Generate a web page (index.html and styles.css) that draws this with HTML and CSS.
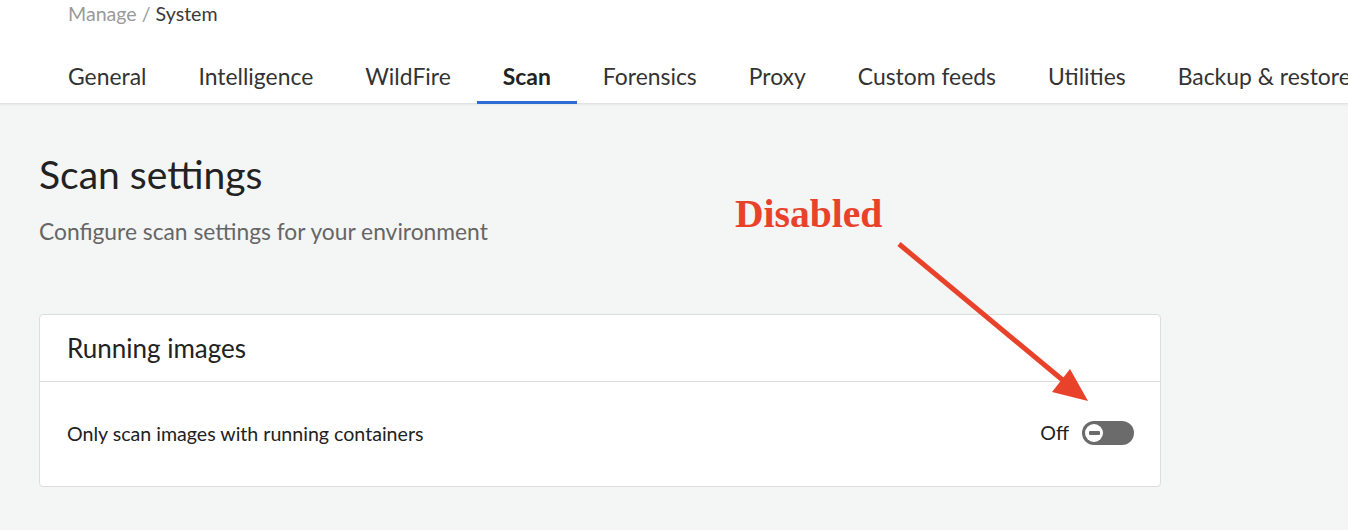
FILE: index.html
```html
<!DOCTYPE html>
<html>
<head>
<meta charset="utf-8">
<link rel="stylesheet" href="styles.css">
</head>
<body>
<header class="top">
  <div class="crumbs"><span class="crumb-muted">Manage</span> <span class="crumb-sep">/</span> <span class="crumb-cur">System</span></div>
  <nav class="tabs">
    <a class="tab">General</a>
    <a class="tab">Intelligence</a>
    <a class="tab">WildFire</a>
    <a class="tab active">Scan</a>
    <a class="tab">Forensics</a>
    <a class="tab">Proxy</a>
    <a class="tab">Custom feeds</a>
    <a class="tab">Utilities</a>
    <a class="tab">Backup &amp; restore</a>
  </nav>
</header>
<main class="content">
  <h1 class="title">Scan settings</h1>
  <p class="subtitle">Configure scan settings for your environment</p>
  <section class="card">
    <div class="card-head">Running images</div>
    <div class="card-row">
      <span class="row-label">Only scan images with running containers</span>
      <div class="switch-wrap">
        <span class="switch-state">Off</span>
        <span class="switch">
          <span class="knob"><span class="minus"></span></span>
        </span>
      </div>
    </div>
  </section>
  <div class="annot">Disabled</div>
  <svg class="arrow" width="240" height="200" viewBox="0 0 240 200">
    <line x1="4" y1="4" x2="170" y2="142" stroke="#e8432a" stroke-width="5" stroke-linecap="butt"/>
    <polygon points="193,161 157,152 175,129" fill="#e8432a"/>
  </svg>
</main>
</body>
</html>
```
FILE: styles.css
```css
* { box-sizing: border-box; }
html, body { margin: 0; padding: 0; }
body {
  font-family: Lato, "Open Sans", "Liberation Sans", sans-serif;
  background: #f4f5f5;
  color: #222;
  width: 1348px;
  height: 530px;
  overflow: hidden;
}
.top {
  background: #fff;
  height: 104px;
  border-bottom: 1px solid #e2e4e4;
  box-shadow: 0 1px 2px rgba(0,0,0,0.06);
  padding-left: 42px;
}
.crumbs {
  font-size: 19.6px;
  line-height: 22px;
  padding: 3px 0 0 26px;
  height: 51px;
}
.crumb-muted, .crumb-sep { color: #9a9a9a; }
.crumb-cur { color: #3a3a3a; }
.tabs {
  display: flex;
  white-space: nowrap;
}
.tab {
  display: block;
  padding: 0 26px;
  font-size: 22.9px;
  line-height: 28px;
  height: 53px;
  padding-top: 11px;
  color: #333;
  border-bottom: 3px solid transparent;
}
.tab.active {
  font-weight: 700;
  color: #222;
  border-bottom-color: #2d6cd0;
}
.content {
  position: relative;
  padding: 0 39px;
  height: 425px;
}
.title {
  margin: 0;
  padding-top: 50px;
  font-size: 39px;
  line-height: 40px;
  font-weight: 400;
  color: #222;
}
.subtitle {
  margin: 0;
  padding-top: 25px;
  font-size: 22.8px;
  line-height: 24px;
  color: #666;
}
.card {
  margin-top: 71px;
  width: 1122px;
  background: #fff;
  border: 1px solid #dcdede;
  border-radius: 4px;
}
.card-head {
  height: 67px;
  padding: 19px 27px 0;
  font-size: 26px;
  line-height: 28px;
  color: #222;
  border-bottom: 1px solid #dcdede;
}
.card-row {
  height: 104px;
  display: flex;
  align-items: center;
  justify-content: space-between;
  padding: 0 26px 0 27px;
}
.row-label {
  font-size: 19.6px;
  color: #222;
  padding-bottom: 2px;
}
.switch-wrap {
  display: flex;
  align-items: center;
  gap: 13px;
  padding-bottom: 3px;
}
.switch-state {
  font-size: 19.6px;
  color: #222;
}
.switch {
  width: 52px;
  height: 24px;
  border-radius: 12px;
  background: #6b6b6b;
  display: flex;
  align-items: center;
  padding-left: 3px;
}
.knob {
  width: 18px;
  height: 18px;
  border-radius: 50%;
  background: #fff;
  display: flex;
  align-items: center;
  justify-content: center;
}
.minus {
  width: 11px;
  height: 4px;
  background: #6b6b6b;
  border-radius: 1px;
}
.annot {
  position: absolute;
  left: 735px;
  top: 88px;
  font-family: "Liberation Serif", "Times New Roman", serif;
  font-weight: 700;
  font-size: 39.6px;
  line-height: 44px;
  color: #e8432a;
}
.arrow {
  position: absolute;
  left: 895px;
  top: 136px;
}
```
